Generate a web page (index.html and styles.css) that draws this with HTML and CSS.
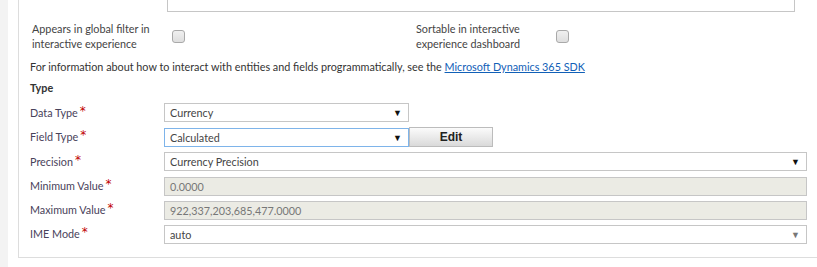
FILE: index.html
```html
<!DOCTYPE html>
<html>
<head>
    <meta charset="utf-8" />
    <title>field properties</title>
<link rel="stylesheet" href="styles.css">
</head>
<body>
<div class="page">
    <div class="gutter"></div>
    <div class="panel">
        <!-- end of the description box -->
        <div class="textarea-end"></div>

        <div class="flags">
            <div class="flag">
                <span class="flag-label">Appears in global filter in interactive experience</span>
                <span class="check"></span>
            </div>
            <div class="flag flag-right">
                <span class="flag-label">Sortable in interactive experience dashboard</span>
                <span class="check"></span>
            </div>
        </div>

        <p class="info">For information about how to interact with entities and fields programmatically, see the <a href="#">Microsoft Dynamics 365 SDK</a></p>

        <h4 class="section">Type</h4>

        <div class="form">
            <div class="row">
                <span class="label">Data Type<b class="req">*</b></span>
                <div class="select short">Currency<span class="arrow">&#9660;</span></div>
            </div>
            <div class="row">
                <span class="label">Field Type<b class="req">*</b></span>
                <div class="select short focus">Calculated<span class="arrow">&#9660;</span></div>
                <button class="btn">Edit</button>
            </div>
            <div class="row">
                <span class="label">Precision<b class="req">*</b></span>
                <div class="select">Currency Precision<span class="arrow">&#9660;</span></div>
            </div>
            <div class="row">
                <span class="label">Minimum Value<b class="req">*</b></span>
                <div class="select disabled">0.0000</div>
            </div>
            <div class="row">
                <span class="label">Maximum Value<b class="req">*</b></span>
                <div class="select disabled">922,337,203,685,477.0000</div>
            </div>
            <div class="row">
                <span class="label">IME Mode<b class="req">*</b></span>
                <div class="select">auto<span class="arrow grey">&#9660;</span></div>
            </div>
        </div>
    </div>
</div>
</body>
</html>
```

FILE: styles.css
```css
body {
    margin: 0;
    background: #ffffff;
    font-family: Lato, "Noto Sans", sans-serif;
    font-size: 10.8px;
    color: #444444;
}

.page {
    display: flex;
    height: 267px;
    overflow: hidden;
}

/* grey strip at the far left */
.gutter {
    width: 8px;
    background: #f3f3f3;
    flex: none;
}

.panel {
    flex: 1;
    margin-left: 10px;
    height: 258px;
    border-left: 1px solid #dddddd;
    border-bottom: 1px solid #dddddd;
    box-sizing: border-box;
    padding-left: 11px;
}

.textarea-end {
    margin-left: 137px;
    width: 628px;
    height: 12px;
    border: 1px solid #c6c6c6;
    border-top: none;
    box-sizing: border-box;
}

/* the two checkbox flags */
.flags {
    display: flex;
    margin-top: 9px;
    padding-left: 2px;
}

.flag {
    display: flex;
    align-items: center;
    width: 384px;
}

.flag-label {
    width: 140px;
    line-height: 15px;
}

.check {
    width: 11px;
    height: 11px;
    border: 1px solid #a9a9a9;
    border-radius: 3px;
    background: linear-gradient(#f0f0f0, #dedede);
}

.info {
    margin: 8px 0 0 0;
    line-height: 16px;
    color: #333333;
}

.info a {
    color: #1160b7;
}

.section {
    margin: 5px 0 0 0;
    font-size: 10.8px;
    line-height: 16px;
    color: #333333;
}

.form {
    display: flex;
    flex-direction: column;
    gap: 5.2px;
    margin-top: 7px;
}

.row {
    display: flex;
    align-items: center;
}

.label {
    width: 134px;
    color: #48425a;
}

.req {
    color: #c00000;
    font-family: "DejaVu Sans", sans-serif;
    font-weight: normal;
    font-size: 12px;
    margin-left: 2px;
    position: relative;
    top: -2px;
}

.select {
    position: relative;
    width: 643px;
    height: 19px;
    line-height: 17px;
    box-sizing: border-box;
    border: 1px solid #c6c6c6;
    padding-left: 5px;
    color: #444444;
}

.select.short {
    width: 245px;
}

.select.focus {
    border-color: #7eb4ea;
}

.select.disabled {
    background: #ebebe4;
    color: #777777;
}

.arrow {
    position: absolute;
    right: 6px;
    top: 0;
    font-size: 9px;
    color: #111111;
}

.arrow.grey {
    color: #777777;
}

.btn {
    width: 84px;
    height: 20px;
    border: 1px solid #bcbcbc;
    background: linear-gradient(#fbfbfb, #dadada);
    font-family: "Liberation Sans", Arial, sans-serif;
    font-size: 12px;
    font-weight: bold;
    color: #222222;
    padding: 0;
}
```
